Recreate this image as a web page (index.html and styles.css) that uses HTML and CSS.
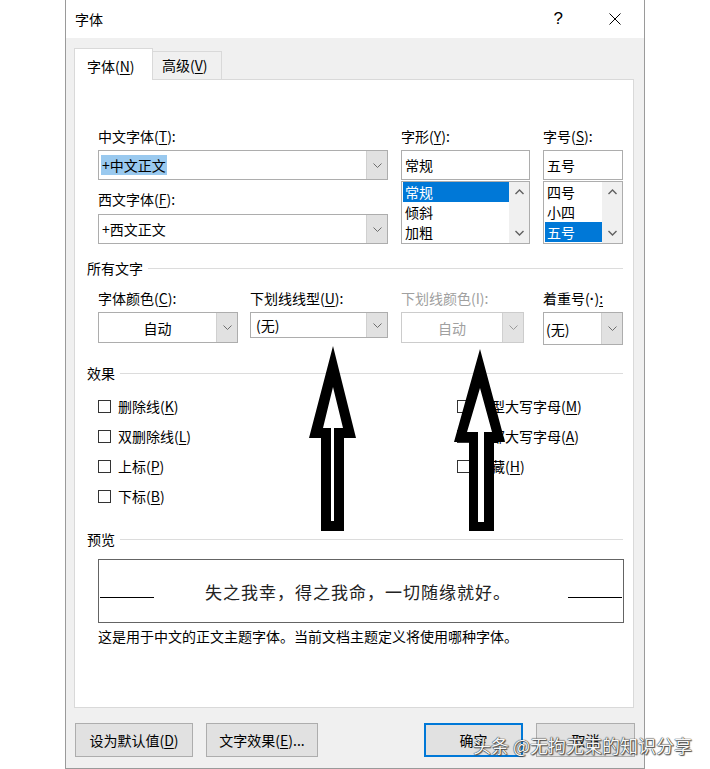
FILE: index.html
```html
<!DOCTYPE html>
<html lang="zh-CN">
<head>
  <meta charset="UTF-8" />
  <title>字体</title>
  <link rel="stylesheet" href="styles.css">
</head>
<body>
  <div class="dialog">
    <div class="titlebar">
      <span class="title">字体</span>
      <span class="help">?</span>
      <svg class="close" width="12" height="12" viewBox="0 0 12 12"><path d="M0.5 0.5 L11.5 11.5 M11.5 0.5 L0.5 11.5" stroke="#000" stroke-width="1" fill="none"/></svg>
    </div>

    <div class="main">
      <div class="tabs">
        <div class="tab active">字体(<u>N</u>)</div>
        <div class="tab">高级(<u>V</u>)</div>
      </div>

      <div class="panel">
        <div class="font-grid">
          <div class="col col-name">
            <div class="lbl">中文字体(<u>T</u>):</div>
            <div class="combo h30">
              <span class="combo-text"><span class="sel-text">+中文正文</span></span>
              <span class="drop"><svg width="9" height="5" viewBox="0 0 9 5"><path d="M0.5 0.5 L4.5 4.5 L8.5 0.5" fill="none" stroke="#6d6d6d"/></svg></span>
            </div>
            <div class="lbl lbl-second">西文字体(<u>F</u>):</div>
            <div class="combo h30 second">
              <span class="combo-text pad3">+西文正文</span>
              <span class="drop"><svg width="9" height="5" viewBox="0 0 9 5"><path d="M0.5 0.5 L4.5 4.5 L8.5 0.5" fill="none" stroke="#6d6d6d"/></svg></span>
            </div>
          </div>

          <div class="col col-style">
            <div class="lbl">字形(<u>Y</u>):</div>
            <div class="textbox">常规</div>
            <div class="listbox">
              <div class="items">
                <div class="item on">常规</div>
                <div class="item">倾斜</div>
                <div class="item">加粗</div>
              </div>
              <div class="vscroll">
                <svg width="9" height="6" viewBox="0 0 9 6"><path d="M0.5 5 L4.5 1 L8.5 5" fill="none" stroke="#606060" stroke-width="1.4"/></svg>
                <svg width="9" height="6" viewBox="0 0 9 6"><path d="M0.5 1 L4.5 5 L8.5 1" fill="none" stroke="#606060" stroke-width="1.4"/></svg>
              </div>
            </div>
          </div>

          <div class="col col-size">
            <div class="lbl">字号(<u>S</u>):</div>
            <div class="textbox">五号</div>
            <div class="listbox">
              <div class="items">
                <div class="item">四号</div>
                <div class="item">小四</div>
                <div class="item on">五号</div>
              </div>
              <div class="vscroll">
                <svg width="9" height="6" viewBox="0 0 9 6"><path d="M0.5 5 L4.5 1 L8.5 5" fill="none" stroke="#606060" stroke-width="1.4"/></svg>
                <svg width="9" height="6" viewBox="0 0 9 6"><path d="M0.5 1 L4.5 5 L8.5 1" fill="none" stroke="#606060" stroke-width="1.4"/></svg>
              </div>
            </div>
          </div>
        </div>

        <div class="group-head head-all">所有文字</div>
        <div class="all-text">
          <div class="field f-color">
            <div class="lbl">字体颜色(<u>C</u>):</div>
            <div class="combo h31">
              <span class="combo-text centered">自动</span>
              <span class="drop"><svg width="9" height="5" viewBox="0 0 9 5"><path d="M0.5 0.5 L4.5 4.5 L8.5 0.5" fill="none" stroke="#6d6d6d"/></svg></span>
            </div>
          </div>
          <div class="field f-line">
            <div class="lbl">下划线线型(<u>U</u>):</div>
            <div class="combo h26">
              <span class="combo-text pad5">(无)</span>
              <span class="drop"><svg width="9" height="5" viewBox="0 0 9 5"><path d="M0.5 0.5 L4.5 4.5 L8.5 0.5" fill="none" stroke="#6d6d6d"/></svg></span>
            </div>
          </div>
          <div class="field f-lcolor disabled">
            <div class="lbl">下划线颜色(I):</div>
            <div class="combo h31">
              <span class="combo-text centered">自动</span>
              <span class="drop"><svg width="9" height="5" viewBox="0 0 9 5"><path d="M0.5 0.5 L4.5 4.5 L8.5 0.5" fill="none" stroke="#9a9a9a"/></svg></span>
            </div>
          </div>
          <div class="field f-emph">
            <div class="lbl">着重号(<span class="latin">·</span>)<u>:</u></div>
            <div class="combo h33">
              <span class="combo-text pad2">(无)</span>
              <span class="drop"><svg width="9" height="5" viewBox="0 0 9 5"><path d="M0.5 0.5 L4.5 4.5 L8.5 0.5" fill="none" stroke="#6d6d6d"/></svg></span>
            </div>
          </div>
        </div>

        <div class="group-head head-fx">效果</div>
        <div class="effects">
          <div class="fx-col">
            <div class="check"><span class="box"></span>删除线(<u>K</u>)</div>
            <div class="check"><span class="box"></span>双删除线(<u>L</u>)</div>
            <div class="check"><span class="box"></span>上标(<u>P</u>)</div>
            <div class="check"><span class="box"></span>下标(<u>B</u>)</div>
          </div>
          <div class="fx-col">
            <div class="check"><span class="box"></span>小型大写字母(<u>M</u>)</div>
            <div class="check"><span class="box"></span>全部大写字母(<u>A</u>)</div>
            <div class="check"><span class="box"></span>隐藏(<u>H</u>)</div>
          </div>
        </div>

        <div class="group-head head-pv">预览</div>
        <div class="preview">
          <span class="pv-line"></span>
          <span class="pv-text">失之我幸，得之我命，一切随缘就好。</span>
          <span class="pv-line"></span>
        </div>
        <p class="note">这是用于中文的正文主题字体。当前文档主题定义将使用哪种字体。</p>
      </div>

      <div class="buttons">
        <button class="btn b-default">设为默认值(<u>D</u>)</button>
        <button class="btn b-effect">文字效果(<u>E</u>)...</button>
        <button class="btn b-ok">确定</button>
        <button class="btn b-cancel">取消</button>
      </div>
    </div>
  </div>

  <!-- hand-drawn arrows lying over the dialog -->
  <svg class="arrows" width="710" height="769" viewBox="0 0 710 769">
    <polygon points="333,346 356,438 344,438 344,531 321,531 321,438 309,438" fill="#000"/>
    <polygon points="333,387 343,428 334,428 334,521 331,521 331,428 323,428" fill="#fff"/>
    <polygon points="480,349 505,442 494,442 494,531 469,531 469,442 454,442" fill="#000"/>
    <polygon points="480,388 492,432 484,432 484,522 478,522 478,432 467,432" fill="#fff"/>
  </svg>

  <div class="watermark">头条 @无拘无束的知识分享</div>
</body>
</html>
```

FILE: styles.css
```css
body {
  margin: 0;
  background: #fff;
  font-family: "Noto Sans CJK SC", "Noto Sans", sans-serif;
  font-size: 14px;
  color: #000;
  position: relative;
  width: 710px;
  height: 769px;
  overflow: hidden;
}
u { text-decoration: underline; text-underline-offset: 2px; }
.latin { font-family: "Liberation Sans", sans-serif; font-weight: bold; }

.dialog {
  margin-left: 65px;
  width: 580px;
  height: 769px;
  box-sizing: border-box;
  border: 1px solid #9a9a9a;
  border-top: none;
  background: #f0f0f0;
}

.titlebar {
  height: 38px;
  background: #fff;
  display: flex;
  align-items: center;
  padding-left: 9px;
}
.titlebar .title { line-height: 20px; }
.titlebar .help {
  margin-left: auto;
  font-family: "Liberation Sans", sans-serif;
  font-size: 17px;
  line-height: 20px;
}
.titlebar .close { margin: 0 23px 0 46px; }

.main { padding: 10px 10px 0 8px; }

.tabs {
  display: flex;
  align-items: flex-end;
  height: 32px;
  position: relative;
  z-index: 2;
}
.tab {
  box-sizing: border-box;
  height: 28px;
  width: 69px;
  border: 1px solid #d9d9d9;
  border-left: none;
  border-bottom: none;
  padding: 3px 0 0 9px;
  line-height: 20px;
  margin-bottom: 1px;
}
.tab.active {
  height: 32px;
  width: 79px;
  background: #fff;
  border-left: 1px solid #d9d9d9;
  padding: 7px 0 0 12px;
  margin-bottom: 0;
}

.panel {
  box-sizing: border-box;
  height: 629px;
  margin-top: -1px;
  background: #fff;
  border: 1px solid #d9d9d9;
  padding: 46px 10px 0 12px;
}

.lbl { height: 20px; line-height: 20px; white-space: nowrap; }

.font-grid { display: flex; margin-left: 11px; }
.col-name { width: 290px; }
.col-style { width: 129px; margin-left: 13px; }
.col-size { width: 80px; margin-left: 13px; }
.lbl-second { margin-top: 9px; }

.combo {
  display: flex;
  box-sizing: border-box;
  border: 1px solid #adadad;
  background: #fff;
  margin-top: 4px;
}
.combo.second { margin-top: 5px; }
.h30 { height: 30px; }
.h31 { height: 31px; }
.h26 { height: 26px; }
.h33 { height: 33px; }
.combo-text {
  flex: 1;
  display: flex;
  align-items: center;
  padding-left: 2px;
  white-space: nowrap;
}
.combo-text.pad3 { padding-left: 3px; }
.combo-text.pad5 { padding-left: 5px; }
.combo-text.pad2 { padding-left: 2px; }
.combo-text.centered { justify-content: center; padding-left: 0; }
.sel-text {
  background: #99c9ef;
  line-height: 20px;
  padding: 0 1px;
}
.drop {
  width: 20px;
  background: #e1e1e1;
  border-left: 1px solid #d0d0d0;
  display: flex;
  align-items: center;
  justify-content: center;
}

.textbox {
  box-sizing: border-box;
  height: 30px;
  margin-top: 4px;
  border: 1px solid #adadad;
  padding-left: 3px;
  line-height: 28px;
}
.listbox {
  box-sizing: border-box;
  height: 63px;
  margin-top: 1px;
  border: 1px solid #adadad;
  display: flex;
}
.listbox .items { flex: 1; padding: 0 0 0 1px; }
.item { height: 20px; line-height: 20px; padding-left: 2px; }
.item.on { background: #0078d7; color: #fff; }
.vscroll {
  width: 20px;
  background: #f0f0f0;
  display: flex;
  flex-direction: column;
  justify-content: space-between;
  align-items: center;
  padding: 7px 0 7px;
}

.group-head {
  display: flex;
  align-items: center;
  height: 20px;
  line-height: 20px;
}
.group-head::after {
  content: "";
  flex: 1;
  height: 1px;
  background: #dcdcdc;
  margin-left: 5px;
}
.head-all { margin-top: 14px; }
.head-fx { margin-top: 18px; }
.head-pv { margin-top: 18px; }

.all-text {
  display: flex;
  align-items: flex-start;
  margin: 10px 0 0 11px;
}
.f-color { width: 140px; }
.f-line { width: 138px; margin-left: 12px; }
.f-lcolor { width: 123px; margin-left: 13px; }
.f-emph { width: 80px; margin-left: 19px; }
.disabled .lbl, .disabled .combo-text { color: #a0a0a0; }
.disabled .combo { border-color: #cccccc; }
.disabled .drop { background: #e3e3e3; }

.effects { display: flex; margin: 8px 0 0 11px; }
.fx-col { flex: 1; }
.fx-col:first-child { flex: none; width: 359px; }
.check {
  height: 30px;
  display: flex;
  align-items: center;
  line-height: 20px;
  white-space: nowrap;
}
.box {
  width: 13px;
  height: 13px;
  border: 1px solid #333;
  box-sizing: border-box;
  margin-right: 7px;
  background: #fff;
}

.preview {
  box-sizing: border-box;
  height: 64px;
  width: 526px;
  margin: 10px 0 0 11px;
  border: 1px solid #646464;
  display: flex;
  align-items: center;
  padding: 0 1px;
}
.pv-line { width: 54px; height: 1px; background: #000; margin-top: 12px; }
.pv-text {
  flex: 1;
  text-align: center;
  font-size: 17px;
  letter-spacing: 1px;
  color: #222;
  margin-right: 6px;
}
.note { margin: 3px 0 0 11px; line-height: 20px; }

.buttons { display: flex; margin-top: 15px; padding-left: 1px; }
.btn {
  height: 34px;
  box-sizing: border-box;
  border: 1px solid #adadad;
  background: #e1e1e1;
  font-family: inherit;
  font-size: 14px;
  color: #000;
  padding: 0;
}
.b-default { width: 118px; }
.b-effect { width: 112px; margin-left: 13px; }
.b-ok { width: 99px; margin-left: auto; border: 2px solid #0078d7; }
.b-cancel { width: 99px; margin-left: 13px; margin-right: -1px; }

.arrows { position: absolute; top: 0; left: 0; pointer-events: none; }

.watermark {
  position: absolute;
  left: 473px;
  top: 733px;
  font-size: 18px;
  line-height: 24px;
  color: #f7f7f7;
  white-space: nowrap;
  text-shadow: 0 0 1px #222, 0 0 1px #222, 1px 1px 1px #555;
}
```
